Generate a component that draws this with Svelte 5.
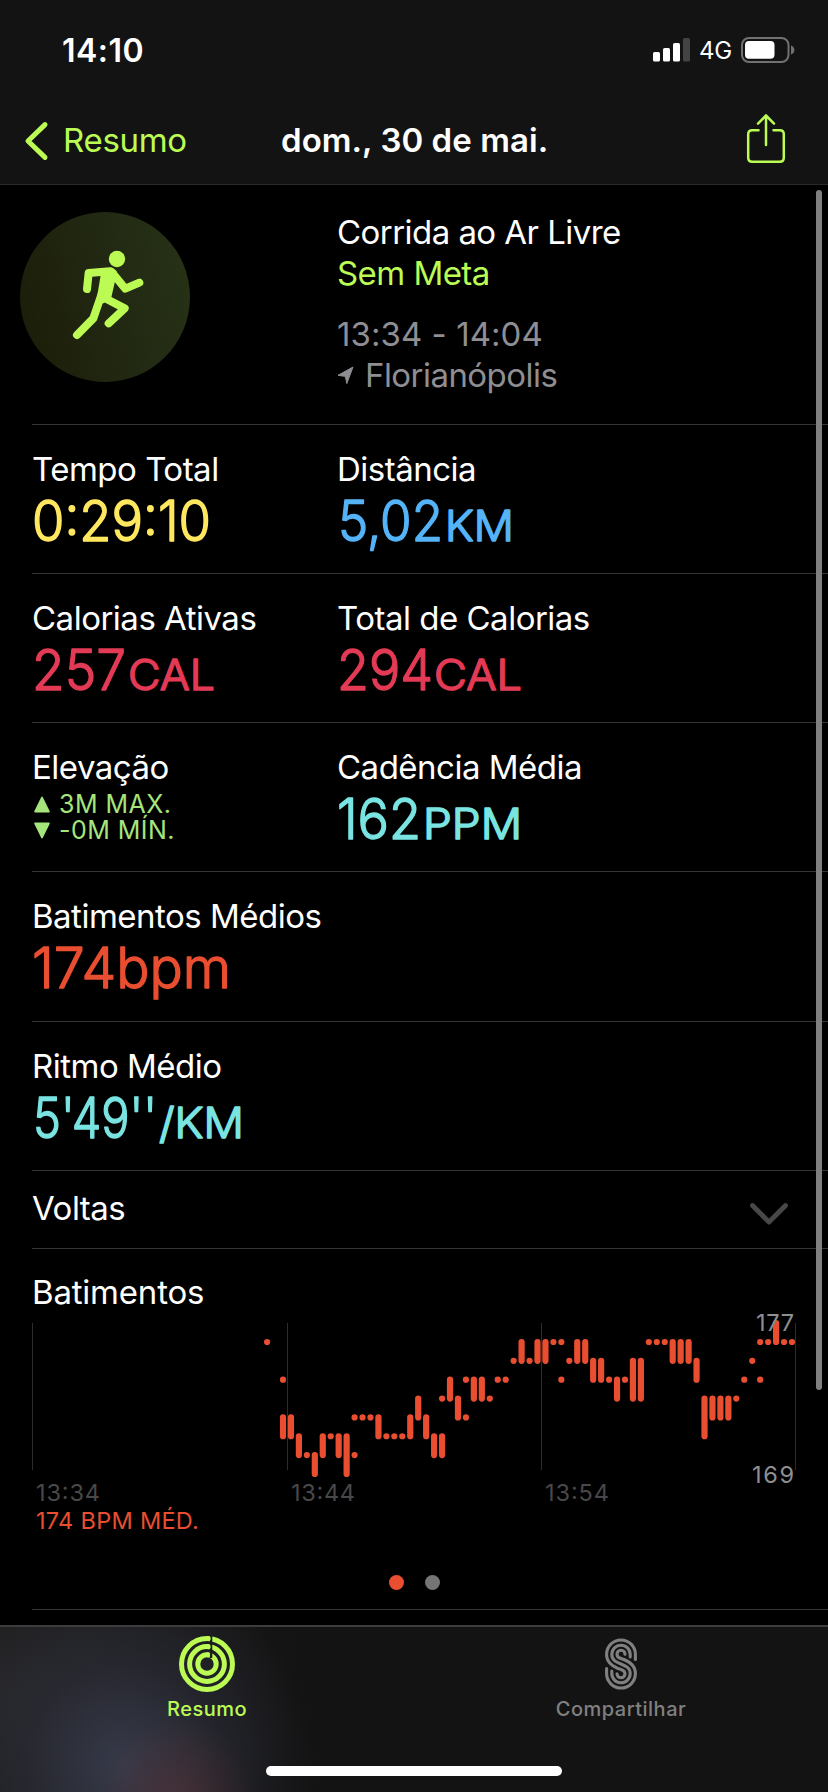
<script>
  const rows = [
    {
      height: 149,
      cells: [
        { label: 'Tempo Total', color: '#ffe85f', parts: [{ t: '0:29:10', x: 0, w: 179, s: 56 }] },
        { label: 'Distância', color: '#55b3f8', parts: [{ t: '5,02', x: 1, w: 105, s: 56 }, { t: 'KM', x: 108, w: 69, s: 42.5 }] }
      ]
    },
    {
      height: 149,
      cells: [
        { label: 'Calorias Ativas', color: '#e33a55', parts: [{ t: '257', x: 0, w: 94, s: 56 }, { t: 'CAL', x: 96, w: 87, s: 42.5 }] },
        { label: 'Total de Calorias', color: '#e33a55', parts: [{ t: '294', x: 0, w: 96, s: 56 }, { t: 'CAL', x: 97, w: 88, s: 42.5 }] }
      ]
    },
    {
      height: 149,
      cells: [
        { label: 'Elevação', elevation: true },
        { label: 'Cadência Média', color: '#79e4e1', parts: [{ t: '162', x: 0, w: 84, s: 56 }, { t: 'PPM', x: 86, w: 99, s: 42.5 }] }
      ]
    },
    {
      height: 150,
      cells: [{ label: 'Batimentos Médios', color: '#e94e31', parts: [{ t: '174bpm', x: 0, w: 199, s: 56 }] }]
    },
    {
      height: 149,
      cells: [{ label: 'Ritmo Médio', color: '#79e4e1', parts: [{ t: "5'49''", x: 1, w: 124, s: 56 }, { t: '/KM', x: 127, w: 85, s: 42.5 }] }]
    }
  ];

  // Heart rate samples: [slot, low bpm, high bpm]
  const beats = [
    [-2, 176, 176], [0, 174, 174], [0, 171, 172], [1, 171, 172], [2, 170, 171], [3, 170, 170],
    [4, 169, 170], [5, 170, 171], [6, 171, 171], [7, 170, 171], [8, 169, 171], [9, 172, 172],
    [9, 170, 170], [10, 172, 172], [11, 172, 172], [12, 171, 172], [13, 171, 171], [14, 171, 171],
    [15, 171, 171], [16, 171, 172], [17, 172, 173], [18, 171, 172], [19, 170, 171], [20, 173, 173],
    [20, 170, 171], [21, 173, 174], [22, 172, 173], [23, 174, 174], [23, 172, 172], [24, 173, 174],
    [25, 173, 174], [26, 173, 173], [27, 174, 174], [28, 174, 174], [29, 175, 175], [30, 175, 176],
    [31, 175, 175], [32, 175, 176], [33, 175, 176], [34, 176, 176], [35, 176, 176], [35, 174, 174],
    [36, 175, 175], [37, 175, 176], [38, 175, 176], [39, 174, 175], [40, 174, 175], [41, 174, 174],
    [42, 173, 174], [43, 174, 174], [44, 173, 175], [45, 173, 175], [46, 176, 176], [47, 176, 176],
    [48, 176, 176], [49, 175, 176], [50, 175, 176], [51, 175, 176], [52, 174, 175], [53, 171, 173],
    [54, 172, 173], [55, 172, 173], [56, 172, 173], [57, 173, 173], [58, 174, 174], [59, 175, 175],
    [60, 176, 176], [60, 174, 174], [61, 176, 176], [62, 176, 177], [63, 176, 176], [64, 176, 176]
  ];
  const bx = (i) => 251 + i * 7.953;
  const by = (v) => 32 + (176 - v) * 18.85;
</script>

<div class="screen">
  <header>
    <div class="status">
      <span class="clock">14:10</span>
      <svg class="signal" width="38" height="24" viewBox="0 0 38 24">
        <rect x="0" y="14" width="7" height="9.5" rx="1.6" fill="#fff" />
        <rect x="10" y="10" width="7" height="13.5" rx="1.6" fill="#fff" />
        <rect x="20" y="5" width="7" height="18.5" rx="1.6" fill="#fff" />
        <rect x="30" y="0" width="7" height="23.5" rx="1.6" fill="#444" />
      </svg>
      <span class="net">4G</span>
      <svg class="battery" width="54" height="26" viewBox="0 0 54 26">
        <rect x="1" y="1" width="46.5" height="24" rx="7" fill="none" stroke="#717171" stroke-width="2" />
        <rect x="4" y="4" width="29.5" height="17.8" rx="4" fill="#fff" />
        <path d="M50 8.5 Q53.4 10 53.4 13 T50 17.5 Z" fill="#717171" />
      </svg>
    </div>
    <nav>
      <svg class="back" width="26" height="42" viewBox="0 0 26 42">
        <path d="M23 4.6 L6 21 L23 37.4" fill="none" stroke="#bbfb54" stroke-width="5" stroke-linecap="round" stroke-linejoin="round" />
      </svg>
      <span class="backlabel">Resumo</span>
      <h1>dom., 30 de mai.</h1>
      <svg class="share" width="40" height="52" viewBox="0 0 40 52">
        <g fill="none" stroke="#bbfb54" stroke-width="2.5" stroke-linecap="round" stroke-linejoin="round">
          <path d="M12.5 17.2 H6.2 Q2.2 17.2 2.2 21.2 V44.7 Q2.2 48.7 6.2 48.7 H33.8 Q37.8 48.7 37.8 44.7 V21.2 Q37.8 17.2 33.8 17.2 H27.5" />
          <path d="M20 32 V2.5 M12 10.6 L20 2.5 L28 10.6" />
        </g>
      </svg>
    </nav>
  </header>

  <main>
    <section class="intro">
      <div class="avatar">
        <svg width="170" height="170" viewBox="60 66 510 510">
          <circle cx="351" cy="207" r="24.5" fill="#bbfb54" />
          <g fill="none" stroke="#bbfb54" stroke-width="24" stroke-linecap="round" stroke-linejoin="round">
            <path d="M261 297 L266 249 L330 244" />
            <path d="M335 246 L376 296 L418 278" />
            <path d="M314 324 L374 355 L326 400" />
            <path d="M305 312 L280 385 L231 435" />
          </g>
          <path d="M303 250 Q330 226 350 243 L346 270 L334 322 L311 340 L288 340 Z" fill="#bbfb54" />
        </svg>
      </div>
      <div class="info">
        <div class="line a">Corrida ao Ar Livre</div>
        <div class="line b">Sem Meta</div>
        <div class="line c">13:34 - 14:04</div>
        <div class="line d">
          <svg width="17" height="19" viewBox="0 0 17 19">
            <path d="M1 9.3 L16 1 L9.8 17.6 L8.4 10.4 Z" fill="#8e8e93" stroke="#8e8e93" stroke-linejoin="round" />
          </svg>
          <span>Florianópolis</span>
        </div>
      </div>
    </section>

    {#each rows as row}
      <section class="row" style:height="{row.height}px">
        {#each row.cells as cell}
          <div class="cell">
            <div class="label">{cell.label}</div>
            {#if cell.elevation}
              <div class="elevs">
                <div class="elev">
                  <svg width="16" height="17" viewBox="0 0 16 17"><path d="M8 1.4 L15 15.6 H1 Z" fill="#a5e57b" stroke="#a5e57b" stroke-width="1.6" stroke-linejoin="round" /></svg>
                  <span>3M MAX.</span>
                </div>
                <div class="elev">
                  <svg width="16" height="17" viewBox="0 0 16 17"><path d="M8 15.6 L15 1.4 H1 Z" fill="#a5e57b" stroke="#a5e57b" stroke-width="1.6" stroke-linejoin="round" /></svg>
                  <span>-0M MÍN.</span>
                </div>
              </div>
            {:else}
              <svg class="value" width="300" height="70" fill={cell.color} stroke={cell.color}>
                {#each cell.parts as p}
                  <text class:unit={p.s < 50} x={p.x} y="51.5" font-size={p.s} textLength={p.w} lengthAdjust="spacingAndGlyphs">{p.t}</text>
                {/each}
              </svg>
            {/if}
          </div>
        {/each}
      </section>
    {/each}

    <section class="laps">
      <span class="label">Voltas</span>
      <svg width="40" height="24" viewBox="0 0 40 24">
        <path d="M3.5 3.5 L20 20 L36.5 3.5" fill="none" stroke="#48484a" stroke-width="4.8" stroke-linecap="round" stroke-linejoin="round" />
      </svg>
    </section>

    <section class="beats">
      <div class="label">Batimentos</div>
      <svg class="chart" width="796" height="214">
        <g stroke="#2c2c2e" stroke-width="1">
          <path d="M.5 13 V160 M255.5 13 V160 M509.5 13 V160 M763.5 13 V160" />
        </g>
        <g stroke="#e94e31" stroke-width="6.2" stroke-linecap="round">
          {#each beats as [i, lo, hi]}
            <line x1={bx(i)} x2={bx(i)} y1={by(lo)} y2={by(hi) + 0.01} />
          {/each}
        </g>
        <g class="axis" font-size="23.5">
          <text x="724" y="21" textLength="38" fill="#8e8e93">177</text>
          <text x="720" y="173" textLength="42" fill="#8e8e93">169</text>
          <text x="4" y="191" textLength="64" fill="#48484a">13:34</text>
          <text x="259" y="191" textLength="64" fill="#48484a">13:44</text>
          <text x="513" y="191" textLength="64" fill="#48484a">13:54</text>
        </g>
      </svg>
      <div class="avg">174 BPM MÉD.</div>
      <div class="dots"><i class="on"></i><i></i></div>
    </section>
    <div class="rule"></div>
  </main>

  <footer>
    <div class="tab on">
      <svg width="58" height="58" viewBox="-29 -29 58 58">
        <g fill="none" stroke="#bbfb54" stroke-width="5">
          <circle r="25.5" /><circle r="17.4" /><circle r="9.2" />
        </g>
        <path d="M4 -29 V-6" stroke="#1c1d1d" stroke-width="2.6" />
        <g fill="#bbfb54"><circle cx="1.2" cy="-25.5" r="2.5" /><circle cx="1.2" cy="-17.3" r="2.5" /><circle cx=".6" cy="-9.2" r="2.5" /></g>
      </svg>
      <span>Resumo</span>
    </div>
    <div class="tab">
      <svg width="58" height="58" viewBox="-29 -29 58 58">
        <g fill="none" stroke="#808080" stroke-width="3.1" stroke-linecap="round">
          <path d="M14.4 -4.6 V-9.6 A14.4 14.4 0 0 0 -14.4 -9.6 C-14.4 -1 -6 3.5 0 5.4 C2.6 6.2 4 7.6 4 9.8 A4 4 0 0 1 -4 9.8" />
          <path d="M9.2 -7 V-9.6 A9.2 9.2 0 0 0 -9.2 -9.6 C-9.2 -4 -5 -2 0 0 S9.2 4 9.2 9.6 A9.2 9.2 0 0 1 -9.2 9.6 V7" />
          <path d="M4 -9.8 A4 4 0 0 0 -4 -9.8 C-4 -7.6 -2.6 -6.2 0 -5.4 C6 -3.5 14.4 1 14.4 9.6 A14.4 14.4 0 0 1 -14.4 9.6 V4.6" />
        </g>
      </svg>
      <span>Compartilhar</span>
    </div>
    <div class="home"></div>
  </footer>
  <div class="scrollbar"></div>
</div>

<style>
  :global(body) { background: #000; }
  .screen {
    position: relative; width: 828px; height: 1792px; overflow: hidden;
    display: flex; flex-direction: column; background: #000; color: #fff;
    font-family: Inter, "Liberation Sans", sans-serif; font-size: 33px; line-height: 41px;
    white-space: nowrap;
  }
  svg { display: block; flex: none; overflow: visible; }
  header { height: 184px; background: #131313; border-bottom: 1px solid #2b2b2c; }
  .status { display: flex; align-items: flex-start; height: 98px; padding: 37px 33px 0 62px; box-sizing: border-box; }
  .clock { flex: 1; font-size: 32px; font-weight: 600; line-height: 27px; letter-spacing: 0.5px; }
  .signal { margin: 1px 8px 0 0; }
  .net { width: 42px; font-size: 24px; font-weight: 400; line-height: 27px; letter-spacing: -0.2px; }
  nav { display: flex; align-items: center; height: 86px; padding: 0 42px 1px 22px; box-sizing: border-box; }
  .back { margin-right: 15px; }
  .backlabel { width: 200px; color: #bbfb54; letter-spacing: -0.3px; }
  h1 { margin: 0 0 0 18px; flex: 1; font-size: 33px; font-weight: 600; letter-spacing: 0.05px; }
  .share { margin-top: -4px; }
  main { flex: 1; }
  .intro { display: flex; height: 239px; box-sizing: border-box; padding: 26px 0 0 20px; }
  .avatar {
    width: 170px; height: 170px; border-radius: 50%; margin: 1px 147px 0 0;
    background: linear-gradient(75deg, #1b1c07, #222913 55%, #273316);
  }
  .line { letter-spacing: -0.55px; }
  .a { line-height: 42px; }
  .b { line-height: 41px; color: #bbfb54; }
  .c { margin-top: 20px; letter-spacing: 0.05px; }
  .c, .d { color: #8e8e93; }
  .d { display: flex; align-items: center; gap: 11px; }
  .row { display: grid; grid-template-columns: 305px 1fr; margin-left: 32px; border-top: 1px solid #363638; box-sizing: border-box; padding-top: 24px; }
  .label { letter-spacing: -0.5px; }
  .value { margin-top: -1px; }
  .value text, .axis text { font-family: Inter, sans-serif; }
  .value { font-weight: 300; stroke-width: 1.4px; stroke-linejoin: round; }
  .value .unit { stroke-width: 1.6px; }
  .elevs { padding: 3px 0 0 2px; }
  .elev { display: flex; align-items: center; gap: 9px; height: 26px; font-size: 25px; line-height: 26px; letter-spacing: .45px; color: #a5e57b; }
  .laps { display: flex; justify-content: space-between; margin-left: 32px; height: 78px; box-sizing: border-box; border-top: 1px solid #363638; padding: 17px 39px 0 0; }
  .laps svg { margin-top: 14px; }
  .beats { margin-left: 32px; height: 361px; box-sizing: border-box; border-top: 1px solid #363638; padding-top: 23px; }
  .beats .label { letter-spacing: -0.2px; }
  .axis text { stroke: none; font-weight: 400; }
  .chart { height: 198px; margin-top: -3px; }
  .avg { font-size: 23.5px; line-height: 26px; letter-spacing: .3px; color: #e94e31; padding-left: 4px; }
  .dots { display: flex; justify-content: center; gap: 21px; margin: 41px 31px 0 0; }
  .dots i { width: 15px; height: 15px; border-radius: 50%; background: #757575; }
  .dots .on { background: #e94e31; }
  .rule { margin-left: 32px; height: 1px; background: #363638; }
  footer {
    position: relative; display: grid; grid-template-columns: 1fr 1fr; height: 167px; box-sizing: border-box; border-top: 2px solid #3d3d3e;
    background:
      radial-gradient(ellipse 80px 90px at 178px 180px, rgba(90, 50, 55, .6), transparent),
      radial-gradient(ellipse 190px 200px at 125px 140px, rgba(62, 66, 86, .8), rgba(50, 52, 68, .45) 50%, transparent),
      radial-gradient(ellipse 300px 260px at 0 60px, #242425, #131313);
  }
  .tab { display: flex; flex-direction: column; align-items: center; padding-top: 8px; color: #808080; font-size: 20px; font-weight: 500; line-height: 28px; letter-spacing: .5px; }
  .tab span { margin-top: 2px; }
  .tab.on { color: #bbfb54; }
  .home { position: absolute; left: 266px; bottom: 16px; width: 296px; height: 10px; border-radius: 5px; background: #fff; }
  .scrollbar { position: absolute; left: 816px; top: 190px; width: 6px; height: 1200px; border-radius: 3px; background: #7f7f7f; }
</style>
